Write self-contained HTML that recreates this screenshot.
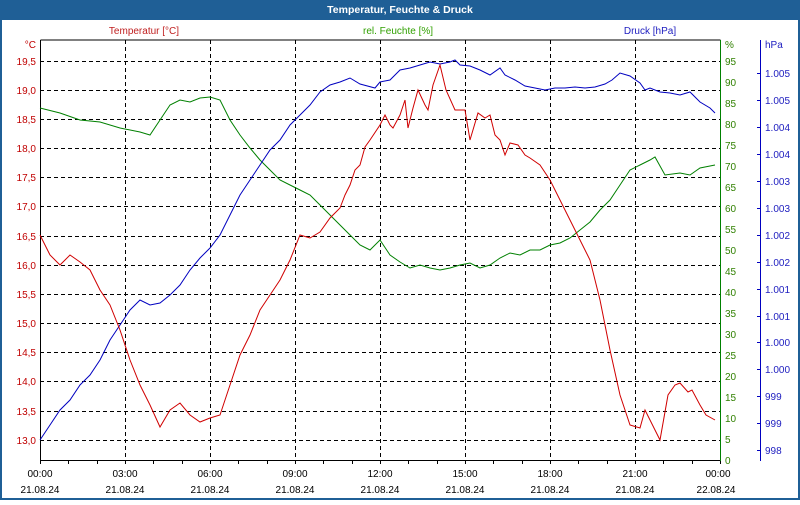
<!DOCTYPE html><html><head><meta charset="utf-8"><style>
body{margin:0;width:800px;height:500px;overflow:hidden;background:#fff;font-family:"Liberation Sans",sans-serif}
</style></head><body>
<svg width="800" height="500" xmlns="http://www.w3.org/2000/svg" font-family="Liberation Sans, sans-serif" font-size="10">
<rect x="0" y="0" width="800" height="500" fill="#1f5f96"/>
<rect x="2" y="20" width="796" height="478" fill="#fff"/>
<text x="400" y="13" fill="#fff" font-weight="bold" font-size="10.5" text-anchor="middle">Temperatur, Feuchte &amp; Druck</text>
<text x="144" y="34" fill="#c02020" text-anchor="middle">Temperatur [°C]</text>
<text x="398" y="34" fill="#30a000" text-anchor="middle">rel. Feuchte [%]</text>
<text x="650" y="34" fill="#2020c0" text-anchor="middle">Druck [hPa]</text>
<g stroke="#000" stroke-dasharray="4,3" stroke-width="1">
<path d="M125.5 40V460M210.5 40V460M295.5 40V460M380.5 40V460M465.5 40V460M550.5 40V460M635.5 40V460"/>
<path d="M40 61.5H720M40 90.5H720M40 119.5H720M40 148.5H720M40 177.5H720M40 206.5H720M40 236.5H720M40 265.5H720M40 294.5H720M40 323.5H720M40 352.5H720M40 381.5H720M40 411.5H720M40 440.5H720"/>
</g>
<path d="M40.5 40V460.5H720" stroke="#000" fill="none"/>
<path d="M40.5 40H720.5" stroke="#000"/>
<path d="M68.5 460v4M97.5 460v4M125.5 460v4M153.5 460v4M182.5 460v4M210.5 460v4M238.5 460v4M267.5 460v4M295.5 460v4M323.5 460v4M352.5 460v4M380.5 460v4M408.5 460v4M437.5 460v4M465.5 460v4M493.5 460v4M522.5 460v4M550.5 460v4M578.5 460v4M607.5 460v4M635.5 460v4M663.5 460v4M692.5 460v4M40.5 460v4M720.5 460v4" stroke="#000"/>
<path d="M720.5 40V461" stroke="#008000"/>
<path d="M760.5 40V461" stroke="#0000c0"/>
<g fill="#c00000" text-anchor="end">
<text x="36" y="48">°C</text>
<text x="36" y="65">19,5</text><text x="36" y="94">19,0</text><text x="36" y="123">18,5</text><text x="36" y="152">18,0</text><text x="36" y="181">17,5</text><text x="36" y="210">17,0</text><text x="36" y="240">16,5</text><text x="36" y="269">16,0</text><text x="36" y="298">15,5</text><text x="36" y="327">15,0</text><text x="36" y="356">14,5</text><text x="36" y="385">14,0</text><text x="36" y="415">13,5</text><text x="36" y="444">13,0</text>
</g>
<g fill="#308000">
<text x="725" y="48">%</text>
<text x="725" y="65">95</text><text x="725" y="86">90</text><text x="725" y="107">85</text><text x="725" y="128">80</text><text x="725" y="149">75</text><text x="725" y="170">70</text><text x="725" y="191">65</text><text x="725" y="212">60</text><text x="725" y="233">55</text><text x="725" y="254">50</text><text x="725" y="275">45</text><text x="725" y="296">40</text><text x="725" y="317">35</text><text x="725" y="338">30</text><text x="725" y="359">25</text><text x="725" y="380">20</text><text x="725" y="401">15</text><text x="725" y="422">10</text><text x="725" y="443">5</text><text x="725" y="464">0</text>
</g>
<g fill="#2020c0">
<text x="765" y="48">hPa</text>
<text x="765" y="77">1.005</text><text x="765" y="104">1.005</text><text x="765" y="131">1.004</text><text x="765" y="158">1.004</text><text x="765" y="185">1.003</text><text x="765" y="212">1.003</text><text x="765" y="239">1.002</text><text x="765" y="266">1.002</text><text x="765" y="293">1.001</text><text x="765" y="320">1.001</text><text x="765" y="346">1.000</text><text x="765" y="373">1.000</text><text x="765" y="400">999</text><text x="765" y="427">999</text><text x="765" y="454">998</text>
</g>
<path d="M757 73.5h4M757 100.5h4M757 127.5h4M757 154.5h4M757 181.5h4M757 208.5h4M757 235.5h4M757 262.5h4M757 289.5h4M757 316.5h4M757 342.5h4M757 369.5h4M757 396.5h4M757 423.5h4M757 450.5h4" stroke="#0000c0"/>
<g fill="#000" text-anchor="middle">
<text x="40" y="477">00:00</text><text x="125" y="477">03:00</text><text x="210" y="477">06:00</text><text x="295" y="477">09:00</text><text x="380" y="477">12:00</text><text x="465" y="477">15:00</text><text x="550" y="477">18:00</text><text x="635" y="477">21:00</text><text x="718" y="477">00:00</text>
<text x="40" y="493">21.08.24</text><text x="125" y="493">21.08.24</text><text x="210" y="493">21.08.24</text><text x="295" y="493">21.08.24</text><text x="380" y="493">21.08.24</text><text x="465" y="493">21.08.24</text><text x="550" y="493">21.08.24</text><text x="635" y="493">21.08.24</text><text x="716" y="493">22.08.24</text>
</g>
<polyline fill="none" stroke="#008000" points="40,108 60,113 80,120 100,122 120,128 140,132 150,135 160,120 170,105 180,100 190,102 200,98 210,97 220,100 230,120 240,135 250,148 260,160 270,170 280,180 290,185 300,190 310,195 320,205 330,215 340,225 350,235 360,245 370,250 380,240 390,255 400,262 410,268 420,265 430,268 440,270 450,268 460,265 470,263 480,268 490,265 500,258 510,253 520,255 530,250 540,250 550,245 560,243 570,238 580,230 590,222 600,210 610,200 620,185 630,170 640,165 650,160 655,157 665,175 680,173 690,175 700,168 715,165"/>
<polyline fill="none" stroke="#0000c0" points="40,440 50,425 60,410 70,400 80,385 90,375 100,360 110,340 120,325 130,310 140,300 150,305 160,303 170,295 180,285 190,270 200,258 210,248 220,235 230,215 240,195 250,180 260,165 270,150 280,140 290,125 300,115 310,105 320,92 330,85 340,82 350,78 360,84 375,88 380,82 390,80 400,70 410,68 420,65 430,62 440,64 450,62 455,60 460,65 470,66 480,70 490,75 500,68 505,75 515,80 525,86 535,88 545,90 555,88 565,88 575,87 585,88 595,87 605,84 612,80 620,73 630,76 640,83 645,90 650,88 660,92 670,93 680,95 690,92 700,102 710,108 715,113"/>
<polyline fill="none" stroke="#d00000" points="40,235 50,255 60,265 70,255 80,262 90,270 100,290 110,305 120,330 130,360 140,385 150,405 160,427 170,410 180,403 190,415 200,422 210,418 220,415 230,385 240,355 250,335 260,310 270,295 280,280 290,260 300,235 310,238 320,232 330,218 340,208 345,195 350,185 355,170 360,165 365,147 370,140 380,125 385,115 390,125 393,128 400,115 405,100 408,128 413,108 418,90 425,105 428,110 433,85 440,65 446,90 455,110 465,110 470,140 478,113 485,118 490,115 495,135 500,140 505,155 510,143 518,145 525,155 530,158 540,165 550,180 560,200 570,220 580,240 590,260 600,300 610,350 620,395 630,425 640,428 645,410 650,420 660,440 668,395 675,385 680,383 688,392 692,390 700,405 706,415 715,420"/>
</svg>
</body></html>
